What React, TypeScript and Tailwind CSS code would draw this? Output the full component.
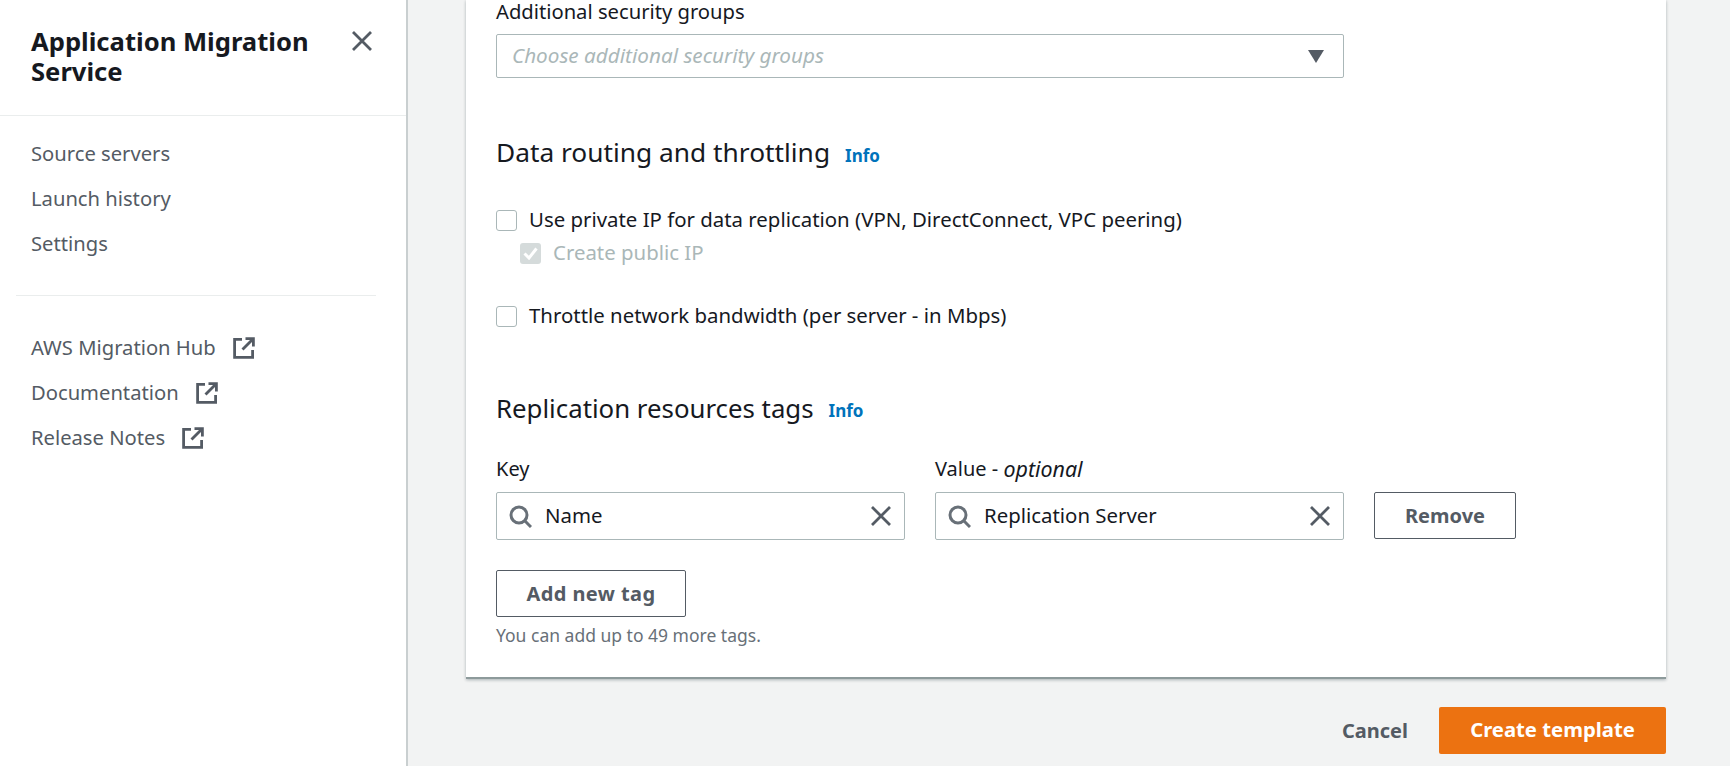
import React from "react";

const font = { fontFamily: '"Noto Sans", "Open Sans", Arial, sans-serif' };

function ExternalIcon() {
  return (
    <svg width="22" height="22" viewBox="0 0 22 22" fill="none" stroke="#545b64" strokeWidth="2.8">
      <path d="M9 2.3H1.6v18h18V13" />
      <path d="M12.5 1.6h7.9v7.9" />
      <path d="M20 2 9.5 12.5" />
    </svg>
  );
}

function CloseIcon({ size = 22 }: { size?: number }) {
  return (
    <svg width={size} height={size} viewBox="0 0 22 22" fill="none" stroke="#545b64" strokeWidth="2.8">
      <path d="M2 2l18 18M20 2 2 20" />
    </svg>
  );
}

function SearchIcon() {
  return (
    <svg width="23" height="23" viewBox="0 0 23 23" fill="none" stroke="#687078" strokeWidth="3">
      <circle cx="10" cy="10" r="8" />
      <path d="M15.5 15.5 22 22" />
    </svg>
  );
}

function TagInput({ value }: { value: string }) {
  return (
    <div className="flex h-[48px] w-[409px] items-center rounded-[2px] border border-[#aab7b8] bg-white pl-[12px] pr-[12px]">
      <SearchIcon />
      <span className="ml-[13px] -mt-[1px] flex-1 text-[20.4px] text-[#16191f]">{value}</span>
      <CloseIcon size={22} />
    </div>
  );
}

function Check({ label }: { label: string }) {
  return (
    <label className="flex h-[24px] items-center gap-[12px] text-[20.4px] text-[#16191f]">
      <span className="h-[21px] w-[21px] rounded-[3px] border border-[#aab7b8] bg-white" />
      <span className="-mt-[2px]">{label}</span>
    </label>
  );
}

function NavLink({ label, external }: { label: string; external?: boolean }) {
  return (
    <a className="flex h-[45px] items-center gap-[17px] pl-[31px] text-[20.2px] text-[#545b64]">
      {label}
      {external && <ExternalIcon />}
    </a>
  );
}

export default function App() {
  return (
    <div className="flex h-[766px] w-[1730px] overflow-hidden bg-[#f2f3f3]" style={font}>
      <aside className="h-full w-[408px] shrink-0 border-r-2 border-[#c9cfd0] bg-white">
        <div className="flex h-[116px] justify-between border-b border-[#eaeded] pl-[31px] pr-[33px] pt-[27px]">
          <h2 className="w-[310px] text-[25.6px] font-bold leading-[30px] text-[#16191f]">Application Migration Service</h2>
          <div className="pt-[3px]">
            <CloseIcon />
          </div>
        </div>
        <nav className="pt-[15px]">
          <NavLink label="Source servers" />
          <NavLink label="Launch history" />
          <NavLink label="Settings" />
        </nav>
        <div className="ml-[16px] mr-[30px] mt-[29px] border-t border-[#eaeded] pt-[29px]" />
        <nav>
          <NavLink label="AWS Migration Hub" external />
          <NavLink label="Documentation" external />
          <NavLink label="Release Notes" external />
        </nav>
      </aside>

      <main className="flex-1 pl-[58px] pr-[64px]">
        <section className="h-[679px] w-[1200px] border-b-2 border-[#8d9a9b] bg-white px-[30px] shadow-[0_1px_3px_rgba(0,28,36,0.3)]">
          <div className="flex h-[22px] items-center text-[20.2px] leading-[22px] text-[#16191f]">Additional security groups</div>
          <div className="mt-[12px] flex h-[44px] w-[848px] items-center justify-between rounded-[2px] border border-[#aab7b8] bg-white pl-[15px] pr-[19px]">
            <span className="text-[20.7px] italic text-[#aab7b8]">Choose additional security groups</span>
            <svg width="16" height="13" viewBox="0 0 16 13" fill="#545b64">
              <path d="M0 0h16L8 13z" />
            </svg>
          </div>

          <div className="mt-[55px] flex h-[40px] items-center gap-[15px]">
            <h3 className="text-[26.3px] font-normal text-[#16191f]">Data routing and throttling</h3>
            <a className="pt-[6px] text-[17px] font-bold text-[#0073bb]">Info</a>
          </div>

          <div className="mt-[35px]">
            <Check label="Use private IP for data replication (VPN, DirectConnect, VPC peering)" />
          </div>
          <div className="mt-[9px] flex h-[24px] items-center gap-[12px] pl-[24px] text-[20.4px] text-[#aab7b8]">
            <span className="flex h-[21px] w-[21px] items-center justify-center rounded-[3px] bg-[#d5dbdb]">
              <svg width="15" height="13" viewBox="0 0 15 13" fill="none" stroke="#fff" strokeWidth="3">
                <path d="M1.5 6.5 6 11l7.5-9.5" />
              </svg>
            </span>
            <span className="-mt-[2px]">Create public IP</span>
          </div>
          <div className="mt-[39px]">
            <Check label="Throttle network bandwidth (per server - in Mbps)" />
          </div>

          <div className="mt-[60px] flex h-[40px] items-center gap-[15px]">
            <h3 className="text-[25.8px] font-normal text-[#16191f]">Replication resources tags</h3>
            <a className="pt-[6px] text-[17px] font-bold text-[#0073bb]">Info</a>
          </div>

          <div className="mt-[29px] flex items-start gap-[30px]">
            <div>
              <div className="flex h-[24px] items-center text-[20px] text-[#16191f]">Key</div>
              <div className="mt-[11px]">
                <TagInput value="Name" />
              </div>
            </div>
            <div>
              <div className="flex h-[24px] items-center text-[20px] text-[#16191f]">
                Value -&nbsp;<em className="text-[21.4px]">optional</em>
              </div>
              <div className="mt-[11px]">
                <TagInput value="Replication Server" />
              </div>
            </div>
            <button className="mt-[35px] h-[47px] w-[142px] rounded-[2px] border border-[#545b64] bg-white text-[20px] font-bold text-[#545b64]">
              Remove
            </button>
          </div>

          <button className="mt-[30px] block h-[47px] w-[190px] rounded-[2px] border border-[#545b64] bg-white text-[20px] font-bold tracking-[0.4px] text-[#545b64]">
            Add new tag
          </button>
          <p className="mt-[7px] text-[17.5px] leading-[22px] text-[#687078]">You can add up to 49 more tags.</p>
        </section>

        <div className="mt-[28px] flex items-center justify-end">
          <button className="mr-[31px] text-[20px] font-bold text-[#545b64]">Cancel</button>
          <button className="h-[47px] w-[227px] rounded-[2px] bg-[#ec7211] pb-[2px] text-[20.3px] font-bold text-white">Create template</button>
        </div>
      </main>
    </div>
  );
}
